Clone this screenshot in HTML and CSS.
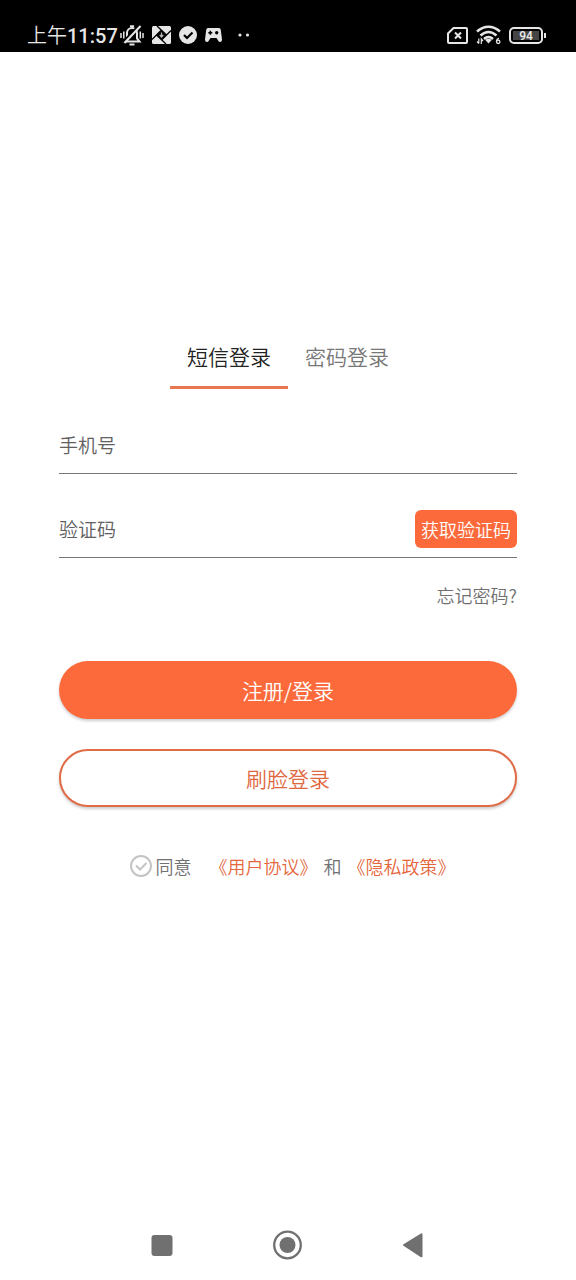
FILE: index.html
```html
<!DOCTYPE html>
<html lang="zh-CN">
<head>
<meta charset="utf-8">
<meta name="viewport" content="width=device-width, initial-scale=1">
<title>登录</title>
<link rel="stylesheet" href="styles.css">
</head>
<body>
<div class="screen">
  <header class="status">
    <div class="status-left">
      <span class="clock">上午<span class="digits">11:57</span></span>
      <svg class="icon-mute" width="24" height="24" viewBox="0 0 24 24" fill="none" stroke="#e6e6e6" stroke-width="2">
        <path d="M4.500 18.500L7 15.500V10a5 5 0 0 1 10 0v5.500l2.500 3z"/>
        <path d="M10 3.300h4M9.500 21.500h5"/>
        <path d="M1 10v5M3.800 8.500v7M20.300 8.500v7M23 10v5" stroke-width="1.500"/>
        <path d="M19 2L2.500 19.500" stroke="#000" stroke-width="2"/>
        <path d="M20.500 3L4.500 20"/>
      </svg>
      <svg class="icon-photo" width="19" height="18" viewBox="0 0 19 18">
        <rect width="19" height="18" rx="1.500" fill="#e6e6e6"/>
        <path d="M5 0l9.500 9M19 4.500L9.500 14M14 18L4.500 9M0 13.500L9.500 4" fill="none" stroke="#000" stroke-width="1.300"/>
        <path d="M9.500 4l5 5-5 5-5-5z" fill="#000"/>
        <path d="M9.500 6.500v4M7.700 9l1.800 2 1.800-2" fill="none" stroke="#b8b8b8" stroke-width="1.200"/>
      </svg>
      <svg class="icon-check" width="18" height="18" viewBox="0 0 18 18">
        <circle cx="9" cy="9" r="9" fill="#e6e6e6"/>
        <path d="M5 9l3 3 5.500-5.500" fill="none" stroke="#000" stroke-width="2.200"/>
      </svg>
      <svg class="icon-game" width="17" height="16" viewBox="0 0 17 16">
        <path d="M3 1h11q1.500 0 1.800 2L17 12.500q0 2.500-2 2.500-1 0-1.600-1L11.500 11h-6L3.600 14Q3 15 2 15 0 15 0 12.500L1.200 3Q1.500 1 3 1z" fill="#e6e6e6"/>
        <path d="M5.300 3.800v4M3.300 5.800h4" stroke="#000" stroke-width="1.600"/>
        <circle cx="11.700" cy="5.800" r="1.700" fill="#000"/>
      </svg>
      <svg class="icon-more" width="12" height="4" viewBox="0 0 12 4" fill="#e6e6e6"><circle cx="2" cy="2" r="1.600"/><circle cx="9.500" cy="2" r="1.600"/></svg>
    </div>
    <div class="status-right">
      <svg width="21" height="17" viewBox="0 0 21 17" fill="none" stroke="#e6e6e6" stroke-width="2">
        <path d="M6.500 1H19q1 0 1 1v13q0 1-1 1H2q-1 0-1-1V6.500z"/>
        <path d="M8 5.500l6 6M14 5.500l-6 6"/>
      </svg>
      <svg width="25" height="20" viewBox="0 0 25 20" fill="none" stroke="#e6e6e6" stroke-width="2.600">
        <path d="M1 6.500Q12.500-3 24 6.500M4.500 10.500Q12.500 3.500 20.500 10.500M8 14Q12.500 10 17 14"/>
        <path d="M9.300 15Q12.500 12.500 15.700 15L12.500 18.500z" fill="#e6e6e6" stroke="none"/>
        <path d="M2.800 13.500v5M1 16.500l1.800 2M5.300 19v-5l1.700 2" stroke-width="1.200"/>
        <path d="M23 13.300q-2.500.5-2.500 3.200" stroke-width="1.300"/>
        <circle cx="22.200" cy="16.800" r="1.700" stroke-width="1.300"/>
      </svg>
      <div class="battery"><span class="battery-level">94</span></div>
    </div>
  </header>

  <main class="login">
    <div class="tabs" role="tablist">
      <button class="tab tab-active" type="button" role="tab" aria-selected="true">短信登录</button>
      <button class="tab" type="button" role="tab" aria-selected="false">密码登录</button>
    </div>
    <form class="form">
      <div class="field">
        <input class="field-input" type="tel" placeholder="手机号" aria-label="手机号">
      </div>
      <div class="field">
        <input class="field-input" type="text" placeholder="验证码" aria-label="验证码">
        <button class="code-button" type="button">获取验证码</button>
      </div>
      <a class="forgot" href="#">忘记密码?</a>
      <button class="button button-primary" type="submit">注册/登录</button>
      <button class="button button-outline" type="button">刷脸登录</button>
      <div class="agreement">
        <label class="agree">
          <span class="tick">
            <input class="tick-input" type="checkbox">
            <svg class="tick-mark" width="22" height="22" viewBox="0 0 22 22" fill="none" stroke="#c4c4c4" stroke-width="2"><path d="M6 10.500l4 4 6.500-6.500"/></svg>
          </span>
          同意
        </label>
        <a class="policy" href="#">《用户协议》</a>
        <span class="and">和</span>
        <a class="policy" href="#">《隐私政策》</a>
      </div>
    </form>
  </main>

  <nav class="system-nav">
    <button class="nav-button" type="button" aria-label="最近任务"><svg width="30" height="30" viewBox="0 0 30 30"><rect x="4.500" y="5" width="21" height="21" rx="3" fill="#707070"/></svg></button>
    <button class="nav-button" type="button" aria-label="主屏幕"><svg width="30" height="30" viewBox="0 0 30 30"><circle cx="14.500" cy="15" r="13.300" fill="none" stroke="#707070" stroke-width="2.300"/><circle cx="14.500" cy="15" r="8" fill="#707070"/></svg></button>
    <button class="nav-button" type="button" aria-label="返回"><svg width="30" height="30" viewBox="0 0 30 30"><path d="M5 15L22.500 4.300v22z" fill="#707070" stroke="#707070" stroke-width="2" stroke-linejoin="round"/></svg></button>
  </nav>
</div>
</body>
</html>
```

FILE: styles.css
```css
* {
  box-sizing: border-box;
}

body {
  margin: 0;
  background: #fff;
  color: #707070;
  font-family: "Noto Sans CJK SC", sans-serif;
  font-size: 18px;
  font-weight: 350;
}

button,
input {
  margin: 0;
  padding: 0;
  border: 0;
  background: none;
  color: inherit;
  font: inherit;
}

a {
  color: inherit;
  text-decoration: none;
}

svg {
  display: block;
  flex: none;
}

.screen {
  display: flex;
  flex-direction: column;
  min-height: 100vh;
}

.status {
  display: flex;
  justify-content: space-between;
  height: 52px;
  padding: 18px 33px 0 27px;
  background: #000;
  color: #e6e6e6;
}

.status-left,
.status-right {
  display: flex;
  align-items: center;
  gap: 8px;
  height: 34px;
}

.clock {
  margin-right: -6px;
  font-size: 20px;
  line-height: 34px;
}

.digits {
  font-family: Roboto, sans-serif;
  font-weight: 500;
}

.icon-more {
  margin-left: 8px;
}

.battery {
  position: relative;
  width: 34px;
  height: 17px;
  padding: 2px;
  border: 2px solid #e6e6e6;
  border-radius: 5px;
}

.battery::after {
  content: "";
  position: absolute;
  top: 4px;
  right: -5px;
  width: 2px;
  height: 5px;
  background: #e6e6e6;
}

.battery-level {
  display: block;
  height: 9px;
  background: #444;
  color: #eee;
  font-family: Roboto, sans-serif;
  font-size: 12px;
  font-weight: 500;
  line-height: 10px;
  text-align: center;
}

.login {
  flex: 1;
  padding: 273px 59px 0;
}

.tabs {
  display: flex;
  justify-content: center;
}

.tab {
  height: 64px;
  padding: 0 17px;
  border-bottom: 3px solid transparent;
  color: #777;
  font-size: 21px;
}

.tab-active {
  border-color: #e87750;
  color: #222;
}

.form {
  display: flex;
  flex-direction: column;
  padding-top: 1px;
}

.field {
  display: flex;
  align-items: center;
  height: 84px;
  padding-top: 26px;
  border-bottom: 1px solid #777;
}

.field-input {
  flex: 1;
  min-width: 0;
  height: 38px;
  font-size: 19px;
  outline: none;
}

.field-input::placeholder {
  color: #606060;
  opacity: 1;
}

.code-button {
  height: 38px;
  padding: 0 6px;
  border-radius: 6px;
  background: #fc6a3c;
  color: #fff;
}

.forgot {
  align-self: flex-end;
  margin: 24px 0 53px;
  line-height: 26px;
}

.button {
  height: 58px;
  border-radius: 29px;
  font-size: 21px;
}

.button-primary {
  margin-bottom: 30px;
  background: #fc6a3c;
  box-shadow: 0 2px 3px #00000033;
  color: #fff;
}

.button-outline {
  border: 2px solid #e06c47;
  background: #fff;
  box-shadow: 0 2px 3px #00000033;
  color: #e0683f;
}

.agreement {
  display: flex;
  justify-content: center;
  align-items: center;
  margin-top: 46px;
  padding-left: 9px;
  line-height: 26px;
}

.agree {
  display: flex;
  align-items: center;
  gap: 4px;
  margin-right: 18px;
}

.tick {
  display: grid;
}

.tick-input,
.tick-mark {
  grid-area: 1 / 1;
}

.tick-input {
  width: 22px;
  height: 22px;
  border: 2px solid #c4c4c4;
  border-radius: 50%;
  appearance: none;
}

.tick-mark {
  pointer-events: none;
}

.policy {
  color: #e4673d;
}

.and {
  margin: 0 6px;
}

.system-nav {
  display: flex;
  justify-content: center;
  gap: 96px;
  padding-bottom: 20px;
}

.nav-button {
  width: 30px;
  height: 30px;
}
```
